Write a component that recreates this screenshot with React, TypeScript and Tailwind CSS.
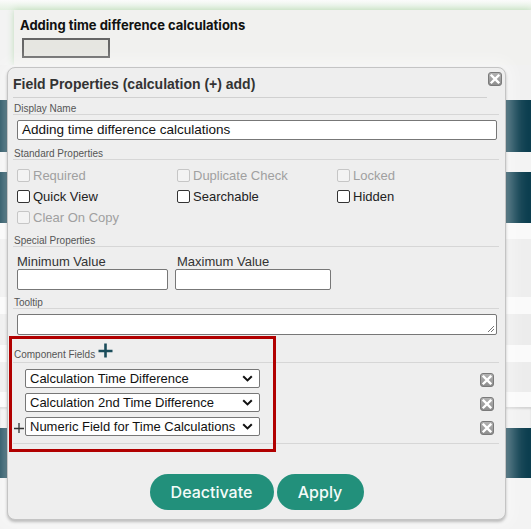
import React from 'react';

const SANS = "font-['Liberation_Sans',Arial,sans-serif]";

// small grey close box with a white cross, used for the dialog and each component row
const CloseBox: React.FC<{ className?: string }> = ({ className }) => (
  <svg width="14" height="14" viewBox="0 0 14 14" className={className}>
    <defs>
      <linearGradient id="cb" x1="0" y1="0" x2="0" y2="1">
        <stop offset="0" stopColor="#b4b4b4" />
        <stop offset="1" stopColor="#8c8c8c" />
      </linearGradient>
    </defs>
    <rect x="0.5" y="0.5" width="13" height="13" rx="2.5" fill="url(#cb)" stroke="#7a7a7a" />
    <path d="M3.6 3.6 L10.4 10.4 M10.4 3.6 L3.6 10.4" stroke="#fff" strokeWidth="2.4" strokeLinecap="square" />
  </svg>
);

const Checkbox: React.FC<{ label: string; disabled?: boolean }> = ({ label, disabled }) => (
  <div className="flex h-[21px] items-center">
    <span
      className={
        disabled
          ? 'h-[13px] w-[13px] rounded-[2px] border border-[#c6c6c6] bg-[#f3f3f3]'
          : 'h-[13px] w-[13px] rounded-[2px] border border-[#333] bg-white'
      }
    />
    <span className={`ml-[3px] text-[13px] leading-[15px] ${disabled ? 'text-[#a0a0a0]' : 'text-[#222]'}`}>{label}</span>
  </div>
);

const SectionLabel: React.FC<{ text: string; className?: string }> = ({ text, className }) => (
  <div className={`h-[13px] border-b border-[#d6d6d6] pl-[1px] text-[10px] leading-[13px] text-[#555] ${className ?? ''}`}>
    {text}
  </div>
);

const FieldSelect: React.FC<{ value: string }> = ({ value }) => (
  <div className="flex h-[19px] w-[235px] items-center rounded-[2px] border border-[#777] bg-white pl-[4px] pr-[6px]">
    <span className="flex-1 truncate text-[13px] leading-[15px] text-[#111]">{value}</span>
    <svg width="11" height="7" viewBox="0 0 11 7">
      <path d="M1.2 1.2 L5.5 5.4 L9.8 1.2" fill="none" stroke="#111" strokeWidth="2" />
    </svg>
  </div>
);

const components = [
  'Calculation Time Difference',
  'Calculation 2nd Time Difference',
  'Numeric Field for Time Calculations',
];

export default function App() {
  return (
    <div className={`relative h-[529px] w-[531px] overflow-hidden bg-[#f3f3f3] ${SANS}`}>
      {/* page behind the dialog */}
      <div className="flex flex-col">
        <div className="h-[10px] bg-gradient-to-b from-[#fbfbfb] to-[#e4f0e2]" />
        <div className="ml-[14px] h-[55px] bg-[#f1f1ef] pl-[6px] pt-[7px] shadow-[0_0_7px_#bcdcb8]">
          <div className="font-['Inter',sans-serif] text-[13px] font-bold leading-[16px] text-[#111]">
            Adding time difference calculations
          </div>
          <div className="ml-[2px] mt-[5px] h-[20px] w-[88px] border-2 border-[#666] bg-[#e6e6e1]" />
        </div>
        <div className="h-[35px] bg-[#f1f1f1]" />
        <div className="h-[52px] bg-[#0c3e4f]" />
        <div className="h-[20px] bg-[#f3f3f3]" />
        <div className="h-[51px] bg-[#0c3e4f]" />
        <div className="h-[16px] bg-[#f9f9f9]" />
        <div className="h-[58px] bg-[#eeeeee]" />
        <div className="h-[17px] bg-[#fafafa]" />
        <div className="h-[31px] bg-[#ececec]" />
        <div className="h-[17px] bg-[#fafafa]" />
        <div className="h-[30px] bg-[#ececec]" />
        <div className="h-[15px] bg-[#fafafa]" />
        <div className="h-[21px] bg-[#f1f1f1] shadow-[inset_0_2px_2px_rgba(0,0,0,0.12)]" />
        <div className="h-[50px] bg-[#0c3e4f]" />
        <div className="flex-1 bg-[#f1f1f1]" />
      </div>

      {/* Field Properties dialog */}
      <div className="absolute left-[7px] top-[67px] h-[453px] w-[499px] rounded-[8px] border border-[#c4c4c4] bg-[#eeeeee] pl-[5px] pr-[6px] shadow-[0_0_16px_7px_rgba(255,255,255,0.4),0_2px_3px_rgba(0,0,0,0.35)]">
        <div className="mr-[12px] border-b border-[#d0d0d0] pb-[4px] pt-[8px] text-[14px] font-bold leading-[17px] text-[#333]">
          Field Properties (calculation (+) add)
        </div>
        <CloseBox className="absolute right-[3px] top-[4px]" />

        <SectionLabel text="Display Name" className="mt-[4px]" />
        <div className="ml-[4px] mr-[2px] mt-[5px] flex h-[20px] items-center rounded-[2px] border border-[#777] bg-white pl-[4px] text-[13.5px] text-[#111]">
          Adding time difference calculations
        </div>

        <SectionLabel text="Standard Properties" className="mt-[7px]" />
        <div className="mt-[5px] grid grid-cols-[160px_160px_160px] pl-[4px]">
          <Checkbox label="Required" disabled />
          <Checkbox label="Duplicate Check" disabled />
          <Checkbox label="Locked" disabled />
          <Checkbox label="Quick View" />
          <Checkbox label="Searchable" />
          <Checkbox label="Hidden" />
          <Checkbox label="Clear On Copy" disabled />
        </div>

        <SectionLabel text="Special Properties" className="mt-[6px]" />
        <div className="mt-[7px] flex pl-[4px]">
          <div className="w-[158px]">
            <div className="text-[13px] leading-[15px] text-[#333]">Minimum Value</div>
            <div className="h-[21px] w-[151px] rounded-[2px] border border-[#777] bg-white" />
          </div>
          <div className="w-[156px]">
            <div className="pl-[2px] text-[13px] leading-[15px] text-[#333]">Maximum Value</div>
            <div className="h-[21px] w-[156px] rounded-[2px] border border-[#777] bg-white" />
          </div>
        </div>

        <SectionLabel text="Tooltip" className="mt-[6px]" />
        <div className="relative ml-[4px] mr-[2px] mt-[5px] h-[21px] rounded-[2px] border border-[#777] bg-white">
          <svg width="8" height="8" viewBox="0 0 8 8" className="absolute bottom-[1px] right-[1px]">
            <path d="M7 1 L1 7 M7 4 L4 7" stroke="#777" strokeWidth="1" />
          </svg>
        </div>

        {/* component fields */}
        <div className="mt-[1px] flex h-[27px] items-end border-b border-[#d6d6d6]">
          <span className="pb-[1px] pl-[1px] text-[10px] leading-[12px] text-[#555]">Component Fields</span>
          <svg width="15" height="15" viewBox="0 0 15 15" className="mb-[4px] ml-[3px]">
            <path d="M7.5 0.5 V14.5 M0.5 8 H14.5" stroke="#1b4d5b" strokeWidth="2.6" />
          </svg>
        </div>
        <div className="mt-[6px] flex flex-col gap-[5px]">
          {components.map((name, i) => (
            <div key={name} className="flex h-[19px] items-center">
              <div className="flex w-[12px] justify-center">
                {i === components.length - 1 && (
                  <svg width="10" height="10" viewBox="0 0 10 10" className="mt-[2px]">
                    <path d="M5 0 V10 M0 5.5 H10" stroke="#333" strokeWidth="1.3" />
                  </svg>
                )}
              </div>
              <FieldSelect value={name} />
              <CloseBox className="ml-auto mr-[5px] mt-[3px]" />
            </div>
          ))}
        </div>
        <div className="mt-[7px] border-t border-[#d6d6d6]" />

        <div className="ml-[1px] mt-[30px] flex justify-center gap-[3px] font-['Inter',sans-serif] text-[16px] font-medium text-[#f4fbf9]">
          <button className="h-[36px] w-[124px] rounded-full bg-[#22907b]">Deactivate</button>
          <button className="h-[36px] w-[87px] rounded-full bg-[#22907b]">Apply</button>
        </div>

        {/* red highlight around the component list */}
        <div className="pointer-events-none absolute left-[1px] top-[268px] h-[116px] w-[267px] border-[3px] border-[#b10000]" />
      </div>
    </div>
  );
}
